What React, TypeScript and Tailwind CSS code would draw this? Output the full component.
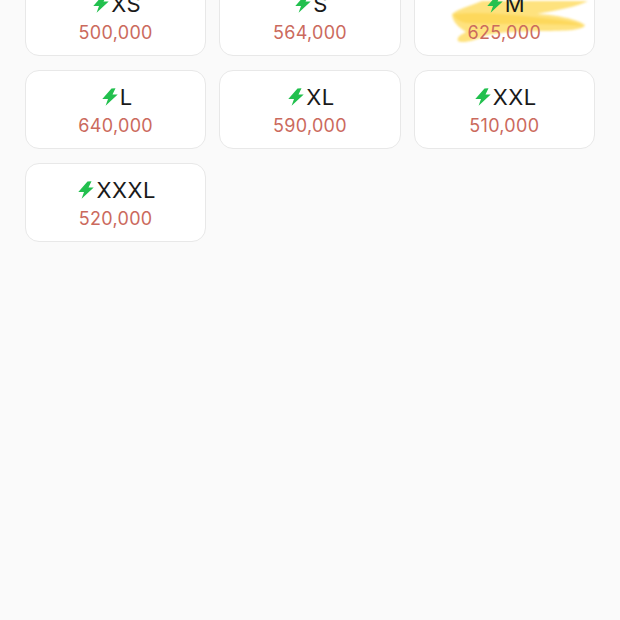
const sizes = [
  { name: "XS", price: "500,000" },
  { name: "S", price: "564,000" },
  { name: "M", price: "625,000", marked: true },
  { name: "L", price: "640,000" },
  { name: "XL", price: "590,000" },
  { name: "XXL", price: "510,000" },
  { name: "XXXL", price: "520,000" },
];

function Bolt() {
  return (
    <svg width="16" height="18" viewBox="0 0 16 18" className="shrink-0">
      <path d="M9.5 0.5 L13.5 0.2 L10.5 6.6 L15.7 6.6 L3.6 17.8 L6 11 L0.3 11 Z" fill="#22c04e" />
    </svg>
  );
}

function Scribble() {
  return (
    <svg
      width="136"
      height="44"
      viewBox="0 0 136 44"
      className="absolute left-[37px] top-[23px] blur-[1px]"
    >
      <path
        d="M0 13 C6 8 18 5 30 0 L136 0 C125 6 105 9 85 13 C105 14 125 18 133 24 C132 29 115 30 90 30 C60 30 45 32 32 35 C25 39 10 43 6 40 C4 36 10 33 14 31 C6 26 0 20 0 13 Z"
        fill="#fee27e"
      />
      <path d="M2 13 C30 10 60 14 90 17 C110 19 125 21 131 25 C100 22 50 24 14 22 C6 20 2 17 2 13 Z" fill="#fdd85c" />
    </svg>
  );
}

export default function App() {
  return (
    <main className="h-[620px] overflow-hidden bg-[#fafafa] font-['Inter',sans-serif]">
      <div className="grid grid-cols-3 gap-x-[13px] gap-y-[14px] px-[25px] -mt-[23px]">
        {sizes.map((s) => (
          <div
            key={s.name}
            className="relative h-[79px] rounded-[14px] border border-[#e8e8e8] bg-white flex flex-col items-center pt-[12px]"
          >
            {s.marked && <Scribble />}
            <div className="relative ml-[3px] flex items-center gap-[2px] text-[22px] leading-[28px] tracking-[0.5px] text-[#1a1a1a]">
              <Bolt />
              {s.name}
            </div>
            <div className="relative mt-[3px] text-[18px] leading-[24px] tracking-[0.3px] text-[#cb6a5d]">
              {s.price}
            </div>
          </div>
        ))}
      </div>
    </main>
  );
}
